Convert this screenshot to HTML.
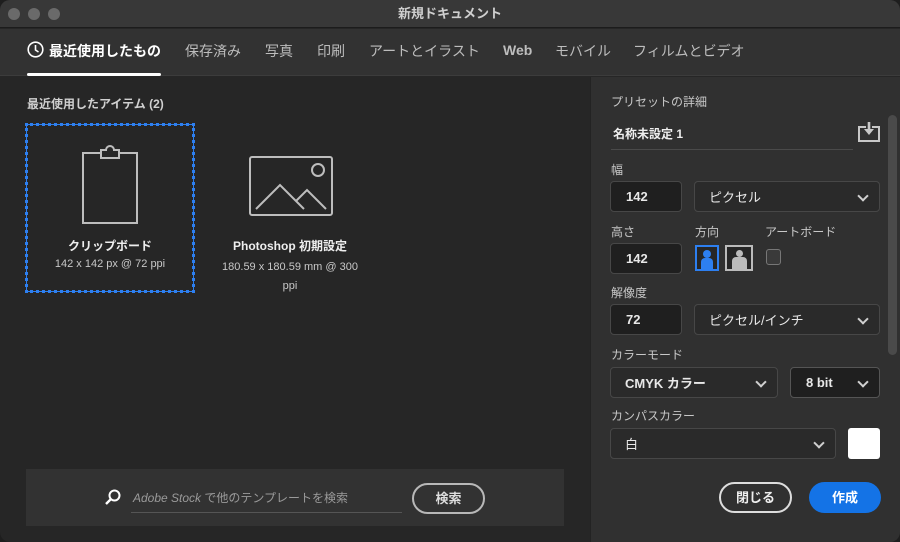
<!DOCTYPE html>
<html><head><meta charset="utf-8"><style>
*{margin:0;padding:0;box-sizing:border-box}
body{width:900px;height:542px;background:#1e1e1e;font-family:"Liberation Sans","Noto Sans CJK JP",sans-serif;color:#d8d8d8;overflow:hidden;position:relative}
.win{position:absolute;left:0;top:0;width:900px;height:542px;border-radius:10px;overflow:hidden;background:#262626}
.title{position:absolute;left:0;top:0;width:900px;height:28px;background:#383838;border-bottom:1px solid #1c1c1c;text-align:center;font-size:13px;line-height:28px;color:#cfcfcf;font-weight:bold}
.dot{position:absolute;top:8px;width:12px;height:12px;border-radius:50%;background:#6a6a6a}
.tabs{position:absolute;left:0;top:29px;width:900px;height:47px;background:#323232;border-bottom:1px solid #3c3c3c}
.tab{position:absolute;top:12px;font-size:14px;color:#bdbdbd}
.abs{position:absolute}
.right{position:absolute;left:590px;top:77px;width:310px;height:465px;background:#303030;border-left:1px solid #232323}
.lbl{position:absolute;font-size:12px;color:#c8c8c8}
.box{position:absolute;border:1px solid #474747;border-radius:4px;background:#2a2a2a;font-size:13px;color:#e8e8e8;padding-left:14px;display:flex;align-items:center}
.box.dark{background:#1f1f1f;font-weight:bold;padding-left:15px}
.chev{position:absolute;right:12px;top:50%;margin-top:-5px;width:8px;height:8px;border-right:2px solid #d0d0d0;border-bottom:2px solid #d0d0d0;transform:rotate(45deg)}
</style></head><body><div class="win">
<div class="title">新規ドキュメント
<div class="dot" style="left:8px"></div><div class="dot" style="left:28px"></div><div class="dot" style="left:48px"></div></div>
<div class="tabs">
<svg class="abs" style="left:27px;top:12px" width="17" height="17" viewBox="0 0 17 17"><circle cx="8.5" cy="8.5" r="7.3" fill="none" stroke="#fff" stroke-width="1.6"/><path d="M8.5 4v5l3 2" fill="none" stroke="#fff" stroke-width="1.6"/></svg>
<div class="tab" style="left:49px;color:#fff;font-weight:bold">最近使用したもの</div>
<div class="abs" style="left:27px;top:44px;width:134px;height:3px;background:#fff;border-radius:2px"></div>
<div class="tab" style="left:185px">保存済み</div>
<div class="tab" style="left:265px">写真</div>
<div class="tab" style="left:317px">印刷</div>
<div class="tab" style="left:369px">アートとイラスト</div>
<div class="tab" style="left:503px;font-weight:bold;top:13px">Web</div>
<div class="tab" style="left:555px">モバイル</div>
<div class="tab" style="left:633px">フィルムとビデオ</div>
</div>
<div class="abs" style="left:27px;top:95px;font-size:12px;color:#d0d0d0;font-weight:bold">最近使用したアイテム (2)</div>
<div class="abs" style="left:25px;top:123px;width:170px;height:170px;border:3px dotted #2d7ff0"></div>
<div class="abs" style="left:26px;top:124px;width:168px;height:168px;border:1px solid #2d7ff0"></div>
<svg class="abs" style="left:80px;top:145px" width="60" height="80" viewBox="0 0 60 80"><path d="M3 8h18v-3h5a4 4 0 0 1 8 0h5v3h18v70h-54z" fill="none" stroke="#bdbdbd" stroke-width="2"/><path d="M21 8v5h18v-5" fill="none" stroke="#bdbdbd" stroke-width="2"/></svg>
<div class="abs" style="left:26px;width:168px;top:237px;text-align:center;font-size:12px;font-weight:bold;color:#eee">クリップボード</div>
<div class="abs" style="left:26px;width:168px;top:258px;text-align:center;font-size:11px;color:#c8c8c8">142 x 142 px @ 72 ppi</div>
<svg class="abs" style="left:248px;top:155px" width="86" height="62" viewBox="0 0 86 62"><rect x="2" y="2" width="82" height="58" rx="2" fill="none" stroke="#bdbdbd" stroke-width="2"/><circle cx="70" cy="15" r="6" fill="none" stroke="#bdbdbd" stroke-width="2"/><path d="M8 54l24-24 24 24M48 46l11-11 19 19" fill="none" stroke="#bdbdbd" stroke-width="2"/></svg>
<div class="abs" style="left:205px;width:170px;top:237px;text-align:center;font-size:12px;font-weight:bold;color:#eee">Photoshop 初期設定</div>
<div class="abs" style="left:205px;width:170px;top:258px;text-align:center;font-size:11px;color:#c8c8c8;line-height:19px">180.59 x 180.59 mm @ 300<br>ppi</div>
<div class="abs" style="left:26px;top:469px;width:538px;height:57px;background:#323232"></div>
<svg class="abs" style="left:104px;top:488px" width="18" height="18" viewBox="0 0 18 18"><circle cx="10.5" cy="7.5" r="5" fill="none" stroke="#fff" stroke-width="2"/><path d="M7 11l-5 5" stroke="#fff" stroke-width="2.4"/></svg>
<div class="abs" style="left:133px;top:489px;font-size:12px;color:#9a9a9a"><i>Adobe Stock</i> で他のテンプレートを検索</div>
<div class="abs" style="left:131px;top:512px;width:271px;height:1px;background:#555"></div>
<div class="abs" style="left:412px;top:483px;width:73px;height:31px;border:2px solid #b8b8b8;border-radius:16px;text-align:center;line-height:27px;font-size:13px;font-weight:bold;color:#ddd">検索</div>
<div class="right">
<div class="lbl" style="left:20px;top:16px">プリセットの詳細</div>
<div class="abs" style="left:22px;top:48px;font-size:12px;font-weight:bold;color:#eee">名称未設定 1</div>
<div class="abs" style="left:20px;top:72px;width:242px;height:1px;background:#4a4a4a"></div>
<svg class="abs" style="left:266px;top:44px" width="24" height="22" viewBox="0 0 24 22"><path d="M9 6h-7v14h20v-14h-7" fill="none" stroke="#c8c8c8" stroke-width="2"/><path d="M12 1v10" stroke="#c8c8c8" stroke-width="2.6"/><path d="M7 8h10l-5 6z" fill="#c8c8c8"/></svg>
<div class="abs" style="left:297px;top:38px;width:9px;height:240px;background:#4a4a4a;border-radius:5px"></div>
<div class="lbl" style="left:20px;top:84px">幅</div>
<div class="box dark" style="left:19px;top:104px;width:72px;height:31px">142</div>
<div class="box" style="left:103px;top:104px;width:186px;height:31px">ピクセル<div class="chev"></div></div>
<div class="lbl" style="left:20px;top:146px">高さ</div>
<div class="lbl" style="left:104px;top:146px">方向</div>
<div class="lbl" style="left:174px;top:146px">アートボード</div>
<div class="box dark" style="left:19px;top:166px;width:72px;height:31px">142</div>
<div class="abs" style="left:104px;top:168px;width:24px;height:26px;border:2px solid #2d7ff0;background:#262626"><div class="abs" style="left:6px;top:3px;width:8px;height:8px;border-radius:50%;background:#2d7ff0"></div><div class="abs" style="left:4px;top:11px;width:12px;height:11px;background:#2d7ff0;border-radius:4px 4px 0 0"></div></div>
<div class="abs" style="left:134px;top:168px;width:28px;height:26px;border:2px solid #bbb;background:#262626"><div class="abs" style="left:9px;top:3px;width:7px;height:7px;border-radius:50%;background:#bbb"></div><div class="abs" style="left:5px;top:10px;width:15px;height:12px;background:#bbb;border-radius:4px 4px 0 0"></div></div>
<div class="abs" style="left:175px;top:172px;width:15px;height:16px;border:1px solid #777;border-radius:3px;background:#3a3a3a"></div>
<div class="lbl" style="left:20px;top:207px">解像度</div>
<div class="box dark" style="left:19px;top:227px;width:72px;height:31px">72</div>
<div class="box" style="left:103px;top:227px;width:186px;height:31px">ピクセル/インチ<div class="chev"></div></div>
<div class="lbl" style="left:20px;top:269px">カラーモード</div>
<div class="box" style="left:19px;top:290px;width:168px;height:31px;font-weight:bold">CMYK カラー<div class="chev"></div></div>
<div class="box dark" style="left:199px;top:290px;width:90px;height:31px;border-color:#555;font-weight:bold">8 bit<div class="chev"></div></div>
<div class="lbl" style="left:20px;top:330px">カンパスカラー</div>
<div class="box" style="left:19px;top:351px;width:226px;height:31px">白<div class="chev"></div></div>
<div class="abs" style="left:257px;top:351px;width:32px;height:31px;background:#fff;border-radius:3px"></div>
<div class="abs" style="left:128px;top:405px;width:73px;height:31px;border:2px solid #ddd;border-radius:16px;text-align:center;line-height:27px;font-size:13px;font-weight:bold;color:#eee">閉じる</div>
<div class="abs" style="left:218px;top:405px;width:72px;height:31px;background:#1473e6;border-radius:16px;text-align:center;line-height:31px;font-size:13px;font-weight:bold;color:#fff">作成</div>
</div>
</div></body></html>
